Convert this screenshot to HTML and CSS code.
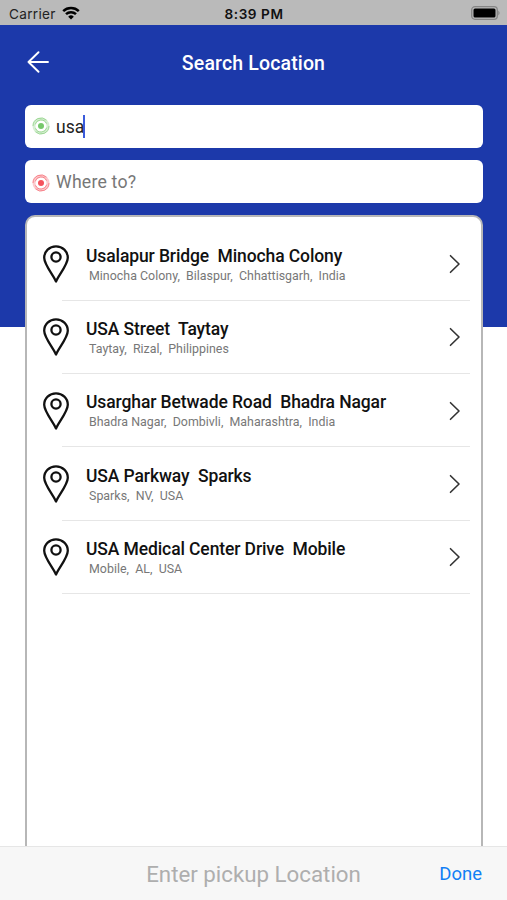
FILE: index.html
```html
<!DOCTYPE html>
<html lang="en">
<head>
<meta charset="utf-8">
<title>Search Location</title>
<link rel="stylesheet" href="styles.css">
</head>
<body>
<svg class="defs" aria-hidden="true">
  <symbol id="pin" viewBox="0 0 28 40"><path d="M14 37.5C11.5 31.5 2.2 20.5 2.2 13.7C2.2 7.2 7.4 2.4 14 2.4S25.8 7.2 25.8 13.7C25.8 20.5 16.5 31.5 14 37.5Z"/><circle cx="14" cy="13" r="4.6"/></symbol>
  <symbol id="chevron" viewBox="0 0 12 20"><path d="M1.5 1.7L10 10L1.5 18.3"/></symbol>
  <symbol id="target" viewBox="0 0 18 18"><circle class="halo" cx="9" cy="9" r="7"/><path class="ring" d="M1 9a8 8 0 0 1 13.5-5.8M17 9a8 8 0 0 1-13.5 5.8M3.2 7.4a6 6 0 0 1 11.3-.8M14.8 10.6a6 6 0 0 1-11.3.8"/><circle class="dot" cx="9" cy="9" r="3"/></symbol>
</svg>
<div class="screen">
  <div class="status">
    <div class="carrier"><span>Carrier</span>
      <svg class="wifi" viewBox="0 0 18 14"><path d="M1.2 5.2a11.3 11.3 0 0 1 15.6 0M4 8.2a7.2 7.2 0 0 1 10 0"/><path class="fill" d="M6.2 10.7a4 4 0 0 1 5.6 0L9 13.6Z"/></svg>
    </div>
    <div class="time">8:39 PM</div>
    <svg class="battery" viewBox="0 0 30 14"><rect class="shell" x=".7" y=".7" width="25.6" height="12.6" rx="3.3"/><rect x="2.5" y="2.5" width="22" height="9" rx="1.5"/><path class="tip" d="M27.3 4.5q2.5 2.5 0 5Z"/></svg>
  </div>
  <header class="header">
    <svg class="back" viewBox="0 0 22 22"><path d="M21 11H1.5M11.5 1.2L1.5 11l10 9.8"/></svg>
    <h1>Search Location</h1>
  </header>
  <div class="fields">
    <div class="field"><svg class="target pickup"><use href="#target"/></svg><span class="value">usa</span><i class="caret"></i></div>
    <div class="field"><svg class="target drop"><use href="#target"/></svg><span class="placeholder">Where to?</span></div>
  </div>
  <ul class="results">
    <li class="row"><svg class="pin"><use href="#pin"/></svg><div class="text"><div class="title">Usalapur Bridge&nbsp; Minocha Colony</div><div class="sub">Minocha Colony,&nbsp; Bilaspur,&nbsp; Chhattisgarh,&nbsp; India</div></div><svg class="chevron"><use href="#chevron"/></svg></li>
    <li class="row"><svg class="pin"><use href="#pin"/></svg><div class="text"><div class="title">USA Street&nbsp; Taytay</div><div class="sub">Taytay,&nbsp; Rizal,&nbsp; Philippines</div></div><svg class="chevron"><use href="#chevron"/></svg></li>
    <li class="row"><svg class="pin"><use href="#pin"/></svg><div class="text"><div class="title">Usarghar Betwade Road&nbsp; Bhadra Nagar</div><div class="sub">Bhadra Nagar,&nbsp; Dombivli,&nbsp; Maharashtra,&nbsp; India</div></div><svg class="chevron"><use href="#chevron"/></svg></li>
    <li class="row"><svg class="pin"><use href="#pin"/></svg><div class="text"><div class="title">USA Parkway&nbsp; Sparks</div><div class="sub">Sparks,&nbsp; NV,&nbsp; USA</div></div><svg class="chevron"><use href="#chevron"/></svg></li>
    <li class="row"><svg class="pin"><use href="#pin"/></svg><div class="text"><div class="title">USA Medical Center Drive&nbsp; Mobile</div><div class="sub">Mobile,&nbsp; AL,&nbsp; USA</div></div><svg class="chevron"><use href="#chevron"/></svg></li>
  </ul>
  <footer class="toolbar"><span class="hint">Enter pickup Location</span><span class="done">Done</span></footer>
</div>
</body>
</html>
```
FILE: styles.css
```css
* { box-sizing: border-box; }
body { margin: 0; font-family: Roboto, "Liberation Sans", sans-serif; background: #fff; }
svg { display: block; fill: none; flex: none; }
.defs { display: none; }
.screen {
  width: 507px; height: 900px; overflow: hidden;
  display: flex; flex-direction: column;
  background: linear-gradient(#1c39aa 327px, #fff 327px);
}
.status {
  height: 25px; flex: none; padding: 2px 8px 0 9px; background: #bababa;
  display: grid; grid-template-columns: 1fr auto 1fr; align-items: center;
  font-family: Inter, sans-serif; font-size: 13.6px; color: #222;
}
.carrier { display: flex; align-items: center; gap: 6px; letter-spacing: .3px; }
.wifi { width: 18px; height: 14px; stroke: #000; stroke-width: 2.5; margin-top: -2px; }
.wifi .fill { fill: #000; stroke: none; }
.time { font-weight: 600; color: #111; letter-spacing: .55px; }
.battery { width: 30px; height: 14px; justify-self: end; fill: #000; margin: -1px -2px 0 0; }
.battery .shell { fill: none; stroke: #858585; stroke-width: 1.3; }
.battery .tip { fill: #858585; }
.header {
  height: 80px; flex: none; padding: 0 27px 6px;
  display: grid; grid-template-columns: 22px 1fr 22px; align-items: center;
}
.back { width: 22px; height: 22px; stroke: #fff; stroke-width: 1.9; stroke-linecap: round; stroke-linejoin: round; }
h1 { margin: 3px 0 0; color: #fff; font-weight: 500; font-size: 19.5px; line-height: 24px; text-align: center; letter-spacing: .15px; }
.fields { display: flex; flex-direction: column; gap: 12.5px; padding: 0 24.5px 0 25px; flex: none; }
.field { height: 42.5px; background: #fff; border-radius: 6px; display: flex; align-items: center; padding-left: 7px; font-size: 17.5px; }
.target { width: 18px; height: 18px; margin-right: 6px; }
.drop { margin-top: 3px; }
.pickup { color: #76c86b; }
.drop { color: #f4525c; }
.halo { stroke: currentColor; stroke-width: 3; opacity: .3; }
.ring { stroke: currentColor; stroke-width: .8; opacity: .75; }
.dot { fill: currentColor; }
.value { color: #222; padding-top: 1px; }
.placeholder { color: #777; font-size: 17.7px; letter-spacing: .2px; padding-top: 1px; }
.caret { width: 2px; height: 23px; background: #3b5bdb; margin-left: -1px; }
.results {
  list-style: none; margin: 12px 24px 0 25px; padding: 11px 11px 0 15px;
  flex: 1; border: 2px solid #b7b7b7; border-bottom: 0; border-radius: 10px 10px 0 0; background: #fff;
}
.row { height: 73.3px; display: flex; align-items: center; position: relative; }
.row::after { content: ""; position: absolute; left: 20px; right: 0; bottom: 0; height: 1px; background: #e6e6e6; }
.pin { width: 28px; height: 40px; stroke: #111; stroke-width: 2.3; stroke-linejoin: round; }
.text { flex: 1; padding: 0 0 0 16px; white-space: nowrap; }
.title { font-size: 17.5px; font-weight: 500; line-height: 22px; color: #111; letter-spacing: -.11px; }
.sub { font-size: 12.4px; line-height: 17px; color: #777; padding-left: 3px; letter-spacing: .02px; }
.chevron { width: 12px; height: 20px; margin-right: 9px; stroke: #333; stroke-width: 1.6; stroke-linecap: round; stroke-linejoin: round; }
.toolbar {
  height: 54px; flex: none; background: #f7f7f7; border-top: 1px solid #e6e6e6;
  display: grid; grid-template-columns: 1fr auto 1fr; align-items: center; padding: 1px 25px 0;
}
.hint { grid-column: 2; font-size: 22.3px; color: #aeaeae; }
.done { justify-self: end; font-size: 18.5px; color: #117ff5; }
```
